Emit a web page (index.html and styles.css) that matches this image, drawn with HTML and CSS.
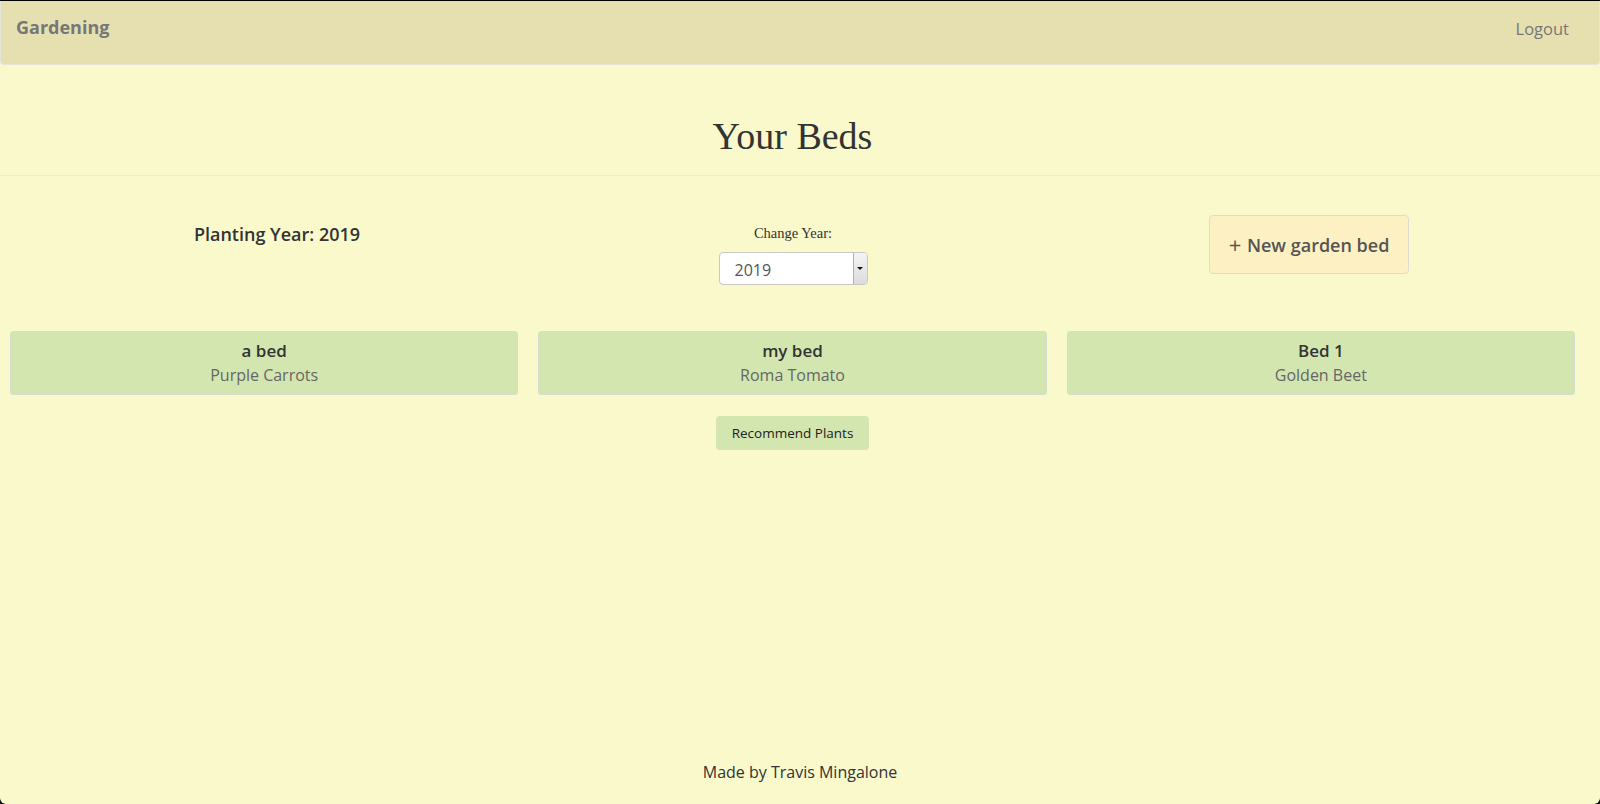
FILE: index.html
```html
<!DOCTYPE html>
<html lang="en">
<head>
<meta charset="utf-8">
<title>Gardening</title>
<link rel="stylesheet" href="styles.css">
</head>
<body>
<div class="window">
  <nav class="navbar">
    <a class="brand" href="#">Gardening</a>
    <a class="nav-link" href="#">Logout</a>
  </nav>

  <header class="page-header">
    <h1 class="page-title">Your Beds</h1>
  </header>

  <section class="controls">
    <div class="col">
      <h4 class="planting-year">Planting Year: 2019</h4>
    </div>
    <div class="col">
      <label class="year-label" for="year">Change Year:</label>
      <div class="select-wrap">
        <select id="year" class="year-select">
          <option>2019</option>
          <option>2018</option>
        </select>
        <span class="select-arrow"><span class="caret"></span></span>
      </div>
    </div>
    <div class="col">
      <button class="btn-new"><span class="plus">+</span> New garden bed</button>
    </div>
  </section>

  <section class="beds">
    <div class="bed">
      <div class="bed-name">a bed</div>
      <div class="bed-plant">Purple Carrots</div>
    </div>
    <div class="bed">
      <div class="bed-name">my bed</div>
      <div class="bed-plant">Roma Tomato</div>
    </div>
    <div class="bed">
      <div class="bed-name">Bed 1</div>
      <div class="bed-plant">Golden Beet</div>
    </div>
  </section>

  <div class="recommend-row">
    <button class="btn-recommend">Recommend Plants</button>
  </div>

  <footer class="footer">Made by Travis Mingalone</footer>
</div>
</body>
</html>
```

FILE: styles.css
```css
* { box-sizing: border-box; }

html, body {
  margin: 0;
  padding: 0;
  background: #000;
}

body {
  font-family: "Open Sans", "Liberation Sans", sans-serif;
  color: #333;
}

.window {
  margin-top: 1px;
  height: 803px;
  background: #f9f9cc;
  border-radius: 0 0 6px 6px;
  display: flex;
  flex-direction: column;
  overflow: hidden;
}

.navbar {
  height: 64px;
  background: #e6e0b0;
  border: 1px solid #e4e4dc;
  border-top: none;
  border-radius: 0 0 4px 4px;
  display: flex;
  justify-content: space-between;
  align-items: flex-start;
  padding: 0 15px 0 0;
}

.brand {
  padding: 14px 15px;
  line-height: 25px;
  font-size: 18px;
  font-weight: 700;
  color: #777;
  text-decoration: none;
}

.nav-link {
  padding: 15px 15px;
  line-height: 25px;
  font-size: 16.5px;
  color: #777;
  text-decoration: none;
}

.page-header {
  padding: 50px 25px 18px 10px;
  border-bottom: 1px solid #ecead2;
  text-align: center;
}

.page-title {
  margin: 0;
  font-family: "Liberation Serif", "DejaVu Serif", serif;
  font-weight: 400;
  font-size: 38px;
  line-height: 42px;
  color: #333;
}

.controls {
  display: grid;
  grid-template-columns: 516px 516px 516px;
  padding: 39px 0 0 19px;
  align-items: start;
}

.col {
  display: flex;
  flex-direction: column;
  align-items: center;
}

.planting-year {
  margin: 7px 0 0;
  font-size: 18px;
  line-height: 25px;
  font-weight: 600;
  color: #333;
}

.year-label {
  margin-top: 8px;
  font-family: "Liberation Serif", "DejaVu Serif", serif;
  font-size: 14.5px;
  line-height: 20px;
  color: #333;
}

.select-wrap {
  position: relative;
  margin-top: 9px;
  width: 149px;
  height: 33px;
}

.year-select {
  -webkit-appearance: none;
  appearance: none;
  width: 149px;
  height: 33px;
  padding: 3px 0 0 15px;
  background: #fff;
  border: 1px solid #c8c8c8;
  border-radius: 4px;
  font-family: "Open Sans", "Liberation Sans", sans-serif;
  font-size: 16px;
  color: #555;
}

.select-arrow {
  position: absolute;
  top: 1px;
  right: 1px;
  width: 14px;
  height: 31px;
  background: linear-gradient(#f4f4f4, #dcdcdc);
  border-left: 1px solid #b0b0b0;
  border-radius: 0 3px 3px 0;
  display: flex;
  align-items: center;
  justify-content: center;
}

.caret {
  width: 0;
  height: 0;
  border-left: 3px solid transparent;
  border-right: 3px solid transparent;
  border-top: 3px solid #111;
}

.btn-new {
  width: 200px;
  height: 59px;
  padding: 0;
  background: #fdf0c2;
  border: 1px solid #dcdcd4;
  border-radius: 4px;
  font-family: "Open Sans", "Liberation Sans", sans-serif;
  font-size: 18px;
  font-weight: 600;
  color: #555;
  cursor: pointer;
}

.plus {
  font-weight: 400;
  font-size: 22px;
  line-height: 1;
  vertical-align: -1px;
  margin-right: 1px;
}

.beds {
  display: grid;
  grid-template-columns: repeat(3, 1fr);
  column-gap: 20px;
  padding: 0 25px 0 10px;
  margin-top: 46px;
}

.bed {
  height: 64px;
  background: #d3e6b0;
  border: 1px solid #d6dcd0;
  border-radius: 3px;
  padding: 6px 0 8px;
  text-align: center;
}

.bed-name {
  font-size: 17px;
  line-height: 25px;
  font-weight: 600;
  color: #333;
}

.bed-plant {
  font-size: 16px;
  line-height: 24px;
  color: #666;
}

.recommend-row {
  display: flex;
  justify-content: center;
  padding: 0 25px 0 10px;
  margin-top: 21px;
}

.btn-recommend {
  height: 34px;
  padding: 0 16px;
  background: #d3e6b0;
  border: none;
  border-radius: 4px;
  font-family: "Open Sans", "Liberation Sans", sans-serif;
  font-size: 13.5px;
  color: #222;
  cursor: pointer;
}

.footer {
  margin-top: auto;
  padding-bottom: 21px;
  text-align: center;
  font-size: 16px;
  line-height: 22px;
  color: #333;
}
```
